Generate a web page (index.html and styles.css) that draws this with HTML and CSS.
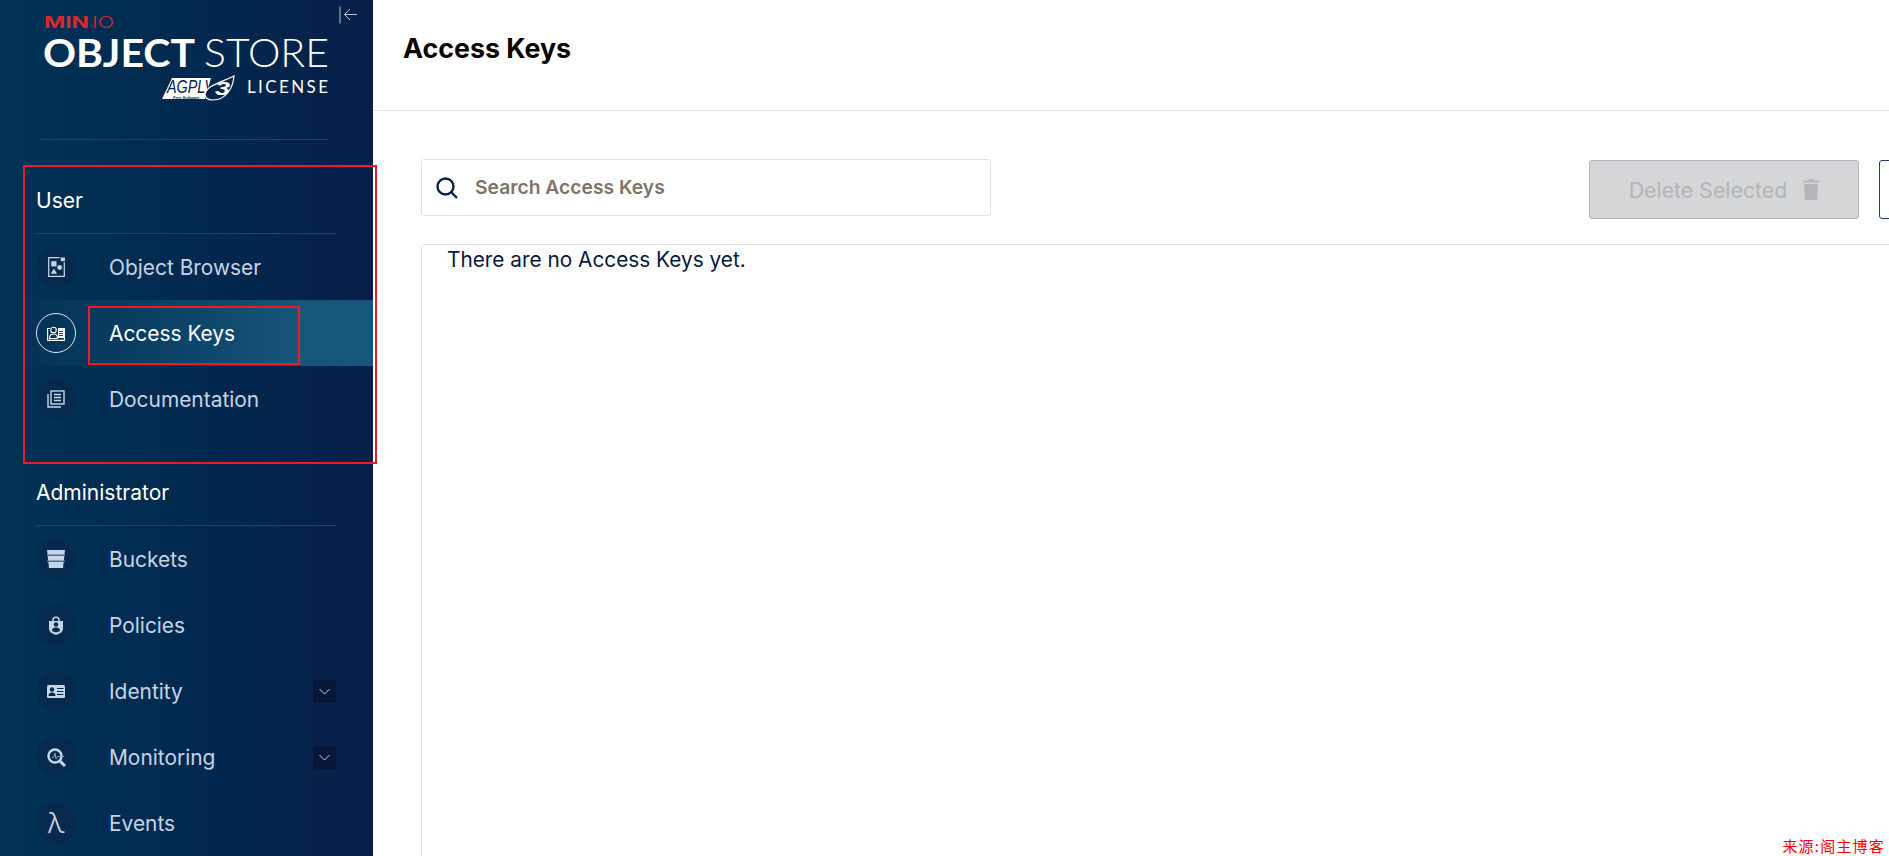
FILE: index.html
```html
<!DOCTYPE html>
<html lang="en">
<head>
  <meta charset="UTF-8" />
  <title>MinIO Console - Access Keys</title>
  <link rel="stylesheet" href="styles.css">
</head>
<body>

  <!-- Sidebar -->
  <aside class="sidebar">
    <button class="collapse-btn" aria-label="Collapse menu">
      <svg width="18" height="18" viewBox="0 0 18 18" fill="none" stroke="#b9c4d2" stroke-width="1">
        <path d="M1 .5V17.5M18 8.5H5.5M11 3 5.5 8.500 11 14" />
      </svg>
    </button>

    <div class="logo">
      <svg width="300" height="108" viewBox="0 0 300 108">
        <text x="4" y="28" class="logo-minio-bold" textLength="45" lengthAdjust="spacingAndGlyphs">MIN</text>
        <text x="52" y="28" class="logo-minio-thin" textLength="22" lengthAdjust="spacingAndGlyphs">IO</text>
        <text x="3" y="66.500" class="logo-object" textLength="152" lengthAdjust="spacingAndGlyphs">OBJECT</text>
        <text x="164" y="66.500" class="logo-store" textLength="125" lengthAdjust="spacingAndGlyphs">STORE</text>
        <path d="M122 99 132 78H171L165 99Z" fill="#fff" />
        <text x="127" y="93" class="logo-agpl" textLength="47" lengthAdjust="spacingAndGlyphs">AGPLV</text>
        <text x="133" y="98.500" class="logo-free">Free Software</text>
        <path d="M165 94C167 86 177 84 194 76 193 88 186 100 173 100 168 100 165 98 165 94Z" fill="#0a2347" stroke="#fff" stroke-width="1.200" />
        <text x="175" y="95" class="logo-three" textLength="15" lengthAdjust="spacingAndGlyphs">3</text>
        <text x="207" y="93" class="logo-license" textLength="81">LICENSE</text>
      </svg>
    </div>

    <div class="nav-heading first">User</div>
    <a class="nav-item">
      <span class="nav-icon">
        <svg width="17" height="20" viewBox="0 0 16 19" fill="none" stroke="#c5d4e6" stroke-width="1.200">
          <path d="M11 .6H.6V18.400H15.400V5" />
          <path d="M12 .5H16V4H12Z" fill="#c5d4e6" stroke="none" />
          <rect x="3" y="4" width="5" height="5" fill="#c5d4e6" stroke="none" />
          <circle cx="11" cy="10" r="2.300" fill="#c5d4e6" stroke="none" />
          <path d="M5.500 11 8.500 16H2.500Z" fill="#c5d4e6" stroke="none" />
        </svg>
      </span>
      <span class="nav-label">Object Browser</span>
    </a>
    <a class="nav-item active">
      <span class="nav-icon">
        <svg width="18" height="15" viewBox="0 0 18 15" fill="none" stroke="#fff" stroke-width="1.100">
          <path d="M3 2.500H.6V14.400H17.400V2.500H11" />
          <circle cx="6.500" cy="4" r="2.800" />
          <path d="M2.500 12.500C2.500 9 4.500 8 6.500 8S10.500 9 10.500 12.500Z" />
          <rect x="11" y="3" width="6" height="9" fill="#fff" stroke="none" />
          <path d="M12 5.500H16M12 7.500H16M12 9.500H16" stroke="#0d4467" />
        </svg>
      </span>
      <span class="nav-label">Access Keys</span>
    </a>
    <a class="nav-item">
      <span class="nav-icon">
        <svg width="18" height="18" viewBox="0 0 18 18" fill="none" stroke="#c5d4e6" stroke-width="1.400">
          <path d="M1 4V17H14" />
          <rect x="4" y="1" width="13" height="13" />
          <path d="M7 4.500H14M7 7.500H14M7 10.500H14" />
        </svg>
      </span>
      <span class="nav-label">Documentation</span>
    </a>

    <div class="nav-heading">Administrator</div>
    <a class="nav-item">
      <span class="nav-icon">
        <svg width="18" height="18" viewBox="0 0 18 18">
          <path d="M0 0H18L16 18H2Z" fill="#c5d4e6" />
          <path d="M0 4.500H18V6H0ZM0 10.500H18V12H0Z" fill="#4f6f92" />
        </svg>
      </span>
      <span class="nav-label">Buckets</span>
    </a>
    <a class="nav-item">
      <span class="nav-icon">
        <svg width="14" height="19" viewBox="0 0 14 19">
          <path d="M4 5V3.500C4 .500 10 .500 10 3.500V5" fill="none" stroke="#c5d4e6" stroke-width="1.500" />
          <path d="M0 5H14V13C14 16 10 18 7 19 4 18 0 16 0 13Z" fill="#c5d4e6" />
          <circle cx="7" cy="8.500" r="2.200" fill="#06294e" />
          <path d="M3 15C3 12 5 11.500 7 11.500S11 12 11 15L7 16.500Z" fill="#06294e" />
        </svg>
      </span>
      <span class="nav-label">Policies</span>
    </a>
    <a class="nav-item">
      <span class="nav-icon">
        <svg width="18" height="13" viewBox="0 0 18 13">
          <rect width="18" height="13" rx="1.500" fill="#c5d4e6" />
          <circle cx="5" cy="4.500" r="2.200" fill="#06294e" />
          <path d="M1.500 11C1.500 8.500 3 7.500 5 7.500S8.500 8.500 8.500 11Z" fill="#06294e" />
          <path d="M10 3.500H16.500M10 6.500H16.500M10 9.500H16.500" stroke="#06294e" stroke-width="1.200" />
        </svg>
      </span>
      <span class="nav-label">Identity</span>
      <span class="nav-arrow">
        <svg width="11" height="7" viewBox="0 0 11 7" fill="none" stroke="#c5d4e6" stroke-width="1"><path d="M.5 1 5.500 6 10.500 1" /></svg>
      </span>
    </a>
    <a class="nav-item">
      <span class="nav-icon">
        <svg width="19" height="19" viewBox="0 0 19 19" fill="none">
          <circle cx="8" cy="8" r="6.500" stroke="#c5d4e6" stroke-width="2.500" />
          <path d="M12.500 12.500 18 18" stroke="#c5d4e6" stroke-width="3" />
          <path d="M5 9.500H6.500L8 5 9 11 10.500 8.500H17" stroke="#8ea5bf" stroke-width="1" />
        </svg>
      </span>
      <span class="nav-label">Monitoring</span>
      <span class="nav-arrow">
        <svg width="11" height="7" viewBox="0 0 11 7" fill="none" stroke="#c5d4e6" stroke-width="1"><path d="M.5 1 5.500 6 10.500 1" /></svg>
      </span>
    </a>
    <a class="nav-item">
      <span class="nav-icon lambda">λ</span>
      <span class="nav-label">Events</span>
    </a>
  </aside>

  <!-- Main -->
  <main class="main">
    <header class="page-header">
      <h1>Access Keys</h1>
    </header>

    <div class="content">
      <div class="toolbar">
        <label class="search">
          <svg width="22" height="22" viewBox="0 0 22 22" fill="none" stroke="#0b2447" stroke-width="2.400">
            <circle cx="9.500" cy="9.500" r="8" />
            <path d="M15 15 21 21" />
          </svg>
          <span class="search-text">Search Access Keys</span>
        </label>
        <button class="btn-delete">
          Delete Selected
          <svg width="16" height="21" viewBox="0 0 16 21" fill="#b3b5b8">
            <path d="M5.500 1.500V0H10.500V1.500H16V3.500H0V1.500Z" />
            <path d="M1 5H15L14 21H2Z" />
          </svg>
        </button>
        <button class="btn-create" aria-label="Create access key"></button>
      </div>

      <div class="list-box">There are no Access Keys yet.</div>
    </div>
  </main>

  <!-- Annotation boxes and watermark on top of the screenshot -->
  <div class="mark mark-group"></div>
  <div class="mark mark-item"></div>
  <div class="watermark">来源:阁主博客</div>

</body>
</html>
```

FILE: styles.css
```css
html, body {
  margin: 0;
  padding: 0;
  height: 100%;
  overflow: hidden;
}
body {
  display: flex;
  position: relative;
  background: #fff;
  font-family: Inter, "Liberation Sans", sans-serif;
}

/* Sidebar */
.sidebar {
  position: relative;
  flex: 0 0 373px;
  height: 100%;
  overflow: hidden;
  background: linear-gradient(90deg, #023357 0%, #01294f 50%, #081f48 100%);
  color: #c5d4e6;
}
.collapse-btn {
  position: absolute;
  top: 6px;
  right: 16px;
  padding: 0;
  border: none;
  background: none;
}
.logo {
  height: 139px;
  margin: 0 45px 0 40px;
  border-bottom: 1px solid #17466b;
}
.logo svg {
  display: block;
}
.logo-minio-bold {
  font: 700 16.500px Inter, sans-serif;
  fill: #d9272e;
}
.logo-minio-thin {
  font: 300 16.500px Inter, sans-serif;
  fill: #d9272e;
}
.logo-object {
  font: 700 39px Lato, sans-serif;
  fill: #fff;
}
.logo-store {
  font: 300 39px Lato, sans-serif;
  fill: #fff;
}
.logo-agpl {
  font: italic 400 18px "Liberation Sans", sans-serif;
  fill: #0a2347;
}
.logo-free {
  font: italic 700 4px "Liberation Sans", sans-serif;
  fill: #0a2347;
}
.logo-three {
  font: italic 700 19px "Liberation Sans", sans-serif;
  fill: #fff;
}
.logo-license {
  font: 400 17px Lato, sans-serif;
  fill: #fff;
}
.nav-heading {
  display: flex;
  align-items: flex-end;
  box-sizing: border-box;
  height: 94px;
  margin: 0 37px 0 36px;
  padding-bottom: 20px;
  border-bottom: 1px solid #17466b;
  color: #fff;
  font-size: 21px;
  line-height: 24px;
}
.nav-item {
  display: flex;
  align-items: center;
  height: 66px;
  padding: 0 37px 0 36px;
  font-size: 20.900px;
}
.nav-item.active {
  color: #fff;
  background: linear-gradient(90deg, rgba(21, 86, 122, 0) 5%, #15567a 80%);
}
.nav-icon {
  display: flex;
  align-items: center;
  justify-content: center;
  box-sizing: border-box;
  flex: 0 0 40px;
  height: 40px;
  margin-right: 33px;
  border-radius: 50%;
  background: #06294e;
}
.nav-item.active .nav-icon {
  border: 1.5px solid #dfe6ee;
  background: none;
}
.lambda {
  font-size: 28px;
  font-weight: 300;
  line-height: 1;
}
.nav-label {
  flex: 1;
}
.nav-arrow {
  display: flex;
  align-items: center;
  justify-content: center;
  width: 23px;
  height: 23px;
  border-radius: 3px;
  background: #07173a;
}

/* Main */
.main {
  flex: 1;
  min-width: 0;
  height: 100%;
  overflow: hidden;
}
.page-header {
  display: flex;
  align-items: center;
  box-sizing: border-box;
  height: 111px;
  padding: 0 30px 15px;
  border-bottom: 1px solid #e5e5e5;
}
.page-header h1 {
  margin: 0;
  color: #0c0603;
  font-size: 26.800px;
  font-weight: 700;
}
.content {
  padding: 48px 0 0 48px;
}
.toolbar {
  display: flex;
  align-items: flex-start;
}
.search {
  display: flex;
  align-items: center;
  gap: 17px;
  box-sizing: border-box;
  flex: 0 0 570px;
  height: 57px;
  padding-left: 14px;
  border: 1px solid #e2e2e2;
  border-radius: 3px;
}
.search-text {
  margin-bottom: 2px;
  color: #7f7468;
  font-size: 19.300px;
  font-weight: 600;
}
.btn-delete {
  display: flex;
  align-items: center;
  justify-content: center;
  gap: 16px;
  box-sizing: border-box;
  flex: 0 0 270px;
  height: 59px;
  margin: 1px 0 0 598px;
  border: 1px solid #b3b5b8;
  border-radius: 3px;
  background: #d4d6d7;
  color: #b3b5b8;
  font-family: Inter, sans-serif;
  font-size: 21.300px;
}
.btn-create {
  flex: 0 0 200px;
  height: 59px;
  margin: 1px 0 0 20px;
  border: 1px solid #1f3f66;
  border-radius: 3px;
  background: #fff;
}
.list-box {
  box-sizing: border-box;
  height: 700px;
  margin: 25px -20px 0 0;
  padding: 3px 25px;
  border: 1px solid #e2e2e2;
  border-radius: 3px;
  color: #07193e;
  font-size: 20.800px;
  line-height: 24px;
}

/* Annotations */
.mark {
  position: absolute;
  box-sizing: border-box;
  border: 2px solid #ed1c24;
}
.mark-group {
  top: 165px;
  left: 23px;
  width: 354px;
  height: 299px;
}
.mark-item {
  top: 306px;
  left: 88px;
  width: 212px;
  height: 59px;
}
.watermark {
  position: absolute;
  right: 4px;
  bottom: 2px;
  background: #fff;
  color: #f00;
  font-family: "Noto Sans CJK SC", sans-serif;
  font-size: 15px;
  letter-spacing: 1.200px;
  line-height: 16px;
}
```
